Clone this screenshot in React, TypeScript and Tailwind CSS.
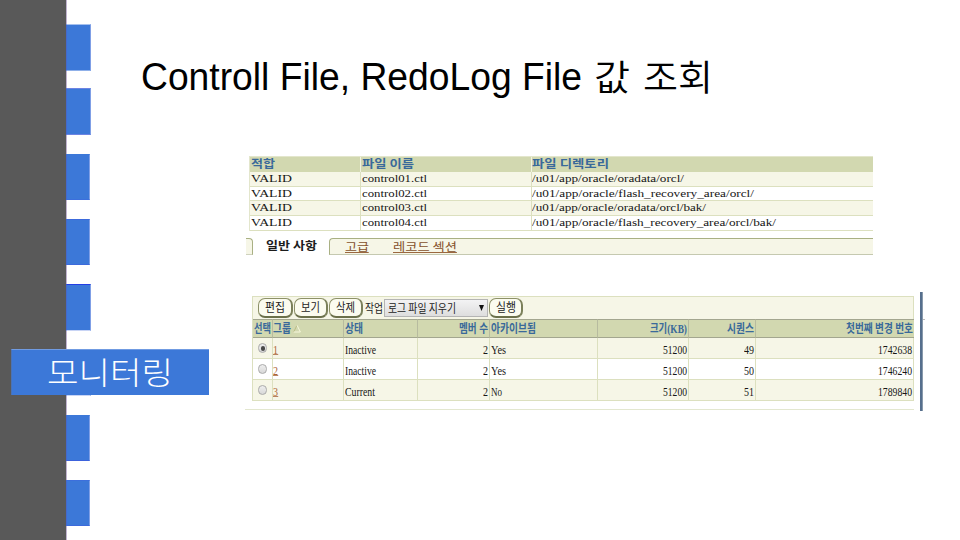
import { useLayoutEffect, useRef, type ReactNode } from 'react';

type FitProps = { w: number; className?: string; children: ReactNode };

/* Single line of text condensed or expanded to a fixed width. */
function Fit({ w, className = '', children }: FitProps) {
  const ref = useRef<HTMLSpanElement>(null);
  useLayoutEffect(() => {
    const el = ref.current;
    if (el && el.offsetWidth) {
      el.style.transform = 'scaleX(' + w / el.getBoundingClientRect().width + ')';
    }
    return () => {
      if (el) el.style.transform = '';
    };
  }, [w]);
  return (
    <span className="block shrink-0" style={{ width: w }}>
      <span ref={ref} className={'block w-max origin-left whitespace-nowrap ' + className}>
        {children}
      </span>
    </span>
  );
}

const serif = "font-['Liberation_Serif','Noto_Sans_CJK_KR',serif]";
const korean = "font-['Noto_Sans_CJK_KR',sans-serif]";

const markers = [
  'mt-[24px] h-[47px] w-[25px] border-t-[#a5c0ee] border-b-[#8fb0e9]',
  'mt-[17px] h-[47px] w-[25px] border-t-[#6c84e3] border-b-[#6c84e3]',
  'mt-[19px] h-[46px] w-[24px] border-t-[#3c78d8] border-b-[#3c6fdc]',
  'mt-[19px] h-[46px] w-[24px] border-t-[#3c6adc] border-b-[#3c6adc]',
  'mt-[19px] h-[47px] w-[25px] border-t-[#243fe4] border-b-[#c8d4f5]',
  'mt-[18px] h-[47px] w-[25px] border-t-[#3c5fdc] border-b-[#c8d4f5]',
  'mt-[19px] h-[46px] w-[24px] border-t-[#3c78d8] border-b-[#3c62dc]',
  'mt-[19px] h-[46px] w-[24px] border-t-[#3c6fdc] border-b-[#3c6adc]',
];

const files = [
  { name: 'control01.ctl', dir: '/u01/app/oracle/oradata/orcl/', w: 152, row: 'h-[15px] bg-[#f6f6e7]' },
  { name: 'control02.ctl', dir: '/u01/app/oracle/flash_recovery_area/orcl/', w: 222, row: 'h-[14px] bg-white' },
  { name: 'control03.ctl', dir: '/u01/app/oracle/oradata/orcl/bak/', w: 174, row: 'h-[15px] bg-[#f6f6e7]' },
  { name: 'control04.ctl', dir: '/u01/app/oracle/flash_recovery_area/orcl/bak/', w: 244, row: 'h-[15px] bg-white' },
];

const groups = [
  { id: '1', state: 'Inactive', sw: 31, arch: 'Yes', aw: 15, seq: '49', scn: '1742638', row: 'h-[21px] bg-[#f6f6e7]' },
  { id: '2', state: 'Inactive', sw: 31, arch: 'Yes', aw: 15, seq: '50', scn: '1746240', row: 'h-[21px] bg-white' },
  { id: '3', state: 'Current', sw: 30, arch: 'No', aw: 11, seq: '51', scn: '1789840', row: 'h-[21px] bg-[#f6f6e7]' },
];

const cols = 'grid grid-cols-[20px_71px_74px_72px_108px_91px_67px_158px]';

function Pill({ w, children }: { w: string; children: ReactNode }) {
  return (
    <span className={'flex h-[20px] justify-center rounded-[7px] border border-r-2 border-b-2 border-[#8c9068] border-r-[#7b805a] border-b-[#6b704b] bg-[#fbfbef] ' + w}>
      {children}
    </span>
  );
}

function HeadCell({ w, end, last, children }: { w: number; end?: boolean; last?: boolean; children: ReactNode }) {
  return (
    <div className={'flex min-w-0 items-center border-y border-y-[#a3a68f] bg-[#d2d8b0] ' + (end ? 'justify-end pr-[1px] ' : 'pl-[1px] ') + (last ? '' : 'border-r border-r-[#b7bb9f]')}>
      <Fit w={w} className={'text-[12px] leading-[16px] font-bold text-[#39699a] ' + serif}>{children}</Fit>
    </div>
  );
}

function Cell({ w, end, children }: { w: number; end?: boolean; children: ReactNode }) {
  return (
    <div className={'flex min-w-0 border-r border-b border-[#dce0bf] pt-[5px] ' + (end ? 'justify-end pr-[1px]' : 'pl-[1px]')}>
      <Fit w={w} className={'text-[11.5px] leading-[14px] text-[#161616] ' + serif}>{children}</Fit>
    </div>
  );
}

export default function App() {
  return (
    <div className="relative flex h-[540px] w-[960px] overflow-hidden bg-white">
      <aside className="h-full w-[66px] shrink-0 bg-[#595959]" />
      <div className="flex h-full w-[25px] shrink-0 flex-col shadow-[inset_1px_0_0_#c0b3cf]">
        {markers.map((m, i) => (
          <div key={i} className={'shrink-0 border-y border-r border-r-[#7f9fe6] border-l border-l-[#4669cb] bg-[#3c78d8] ' + m} />
        ))}
      </div>

      <main className="flex flex-1 flex-col">
        <h1 className="mt-[54px] ml-[50px] flex h-[46px] items-start text-black">
          <Fit w={441} className="font-['Liberation_Sans',sans-serif] text-[38px] leading-[47px]">Controll File, RedoLog File</Fit>
          <span className="ml-[12px] flex gap-[13px]">
            <Fit w={36} className={'text-[36px] leading-[42px] font-[350] ' + korean}>값</Fit>
            <Fit w={70} className={'text-[36px] leading-[42px] font-[350] ' + korean}>조회</Fit>
          </span>
        </h1>

        <section className="mt-[56px] ml-[158px] w-[624px] border-l border-[#e3e6cc]">
          <div className="grid h-[16px] grid-cols-[111px_171px_1fr] border-t border-[#e3e6cc] bg-[#d2d8b0]">
            <div className="flex border-r border-[#f0f2e0] pl-[1px]">
              <Fit w={24} className={'text-[11px] leading-[12px] font-bold text-[#39699a] ' + korean}>적합</Fit>
            </div>
            <div className="flex border-r border-[#f0f2e0] pl-[1px]">
              <Fit w={52} className={'text-[11px] leading-[12px] font-bold text-[#39699a] ' + korean}>파일 이름</Fit>
            </div>
            <div className="flex">
              <Fit w={77} className={'text-[11px] leading-[12px] font-bold text-[#39699a] ' + korean}>파일 디렉토리</Fit>
            </div>
          </div>
          {files.map((f) => (
            <div key={f.name} className={'grid grid-cols-[111px_171px_1fr] border-b border-[#dce0bf] ' + f.row}>
              <div className="flex items-center border-r border-[#dce0bf] pl-[1px]">
                <Fit w={41} className={'text-[10px] leading-[12px] text-[#161616] ' + serif}>VALID</Fit>
              </div>
              <div className="flex items-center border-r border-[#dce0bf] pl-[1px]">
                <Fit w={65} className={'text-[10px] leading-[12px] text-[#161616] ' + serif}>{f.name}</Fit>
              </div>
              <div className="flex items-center">
                <Fit w={f.w} className={'text-[10px] leading-[12px] text-[#161616] ' + serif}>{f.dir}</Fit>
              </div>
            </div>
          ))}
        </section>

        <nav className="mt-[7px] ml-[155px] flex h-[17px] w-[627px]">
          <div className="w-[7px] rounded-tr-[4px] border-t border-r border-b border-[#a9b083] border-b-[#cfd2bd] bg-[#f6f6e7]" />
          <div className="flex w-[76px] pl-[13px]">
            <Fit w={51} className={'text-[11px] leading-[15px] font-bold text-[#1c1c1c] ' + korean}>일반 사항</Fit>
          </div>
          <div className="flex flex-1 items-center gap-[24px] rounded-tl-[4px] border-t border-b border-l border-[#a9b083] border-b-[#c5c9b0] bg-[#f6f6e7] pl-[15px]">
            <Fit w={24} className={'border-b border-[#9b6840] text-[11px] leading-[11px] text-[#85512b] ' + korean}>고급</Fit>
            <Fit w={64} className={'border-b border-[#9b6840] text-[11px] leading-[11px] text-[#85512b] ' + korean}>레코드 섹션</Fit>
          </div>
        </nav>

        <div className="mt-[37px] ml-[154px] flex">
          <section className="mt-[4px] h-[114px] w-[669px] border-b border-[#e3e7cf] pl-[7px]">
            <div className="w-[662px] border-l border-[#dce0bf]">
              <div className="flex h-[23px] border-t border-r border-[#dce0bf] bg-[#f6f6e7] pt-[1px] pl-[5px]">
                <Pill w="w-[35px]"><Fit w={20} className={'text-[12px] leading-[15px] text-[#222] ' + korean}>편집</Fit></Pill>
                <Pill w="ml-[1px] w-[34px]"><Fit w={19} className={'text-[12px] leading-[15px] text-[#222] ' + korean}>보기</Fit></Pill>
                <Pill w="ml-[1px] w-[34px]"><Fit w={19} className={'text-[12px] leading-[15px] text-[#222] ' + korean}>삭제</Fit></Pill>
                <span className="mt-[2px] ml-[2px]"><Fit w={18} className={'text-[12px] leading-[16px] text-[#222] ' + korean}>작업</Fit></span>
                <span className="mt-px ml-[1px] flex h-[18px] w-[104px] items-center justify-between border border-[#b4b4b4] bg-linear-to-b from-[#f3f3f4] to-[#dedede] pr-[3px] pl-[3px]">
                  <Fit w={68} className={'text-[12px] leading-[16px] text-[#222] ' + korean}>로그 파일 지우기</Fit>
                  <svg width="5" height="6" viewBox="0 0 5 6"><path d="M0 0H5L2.5 6Z" fill="#111" /></svg>
                </span>
                <Pill w="ml-[1px] w-[34px]"><Fit w={20} className={'text-[12px] leading-[15px] text-[#222] ' + korean}>실행</Fit></Pill>
              </div>
              <div className={'h-[19px] ' + cols}>
                <HeadCell w={17}>선택</HeadCell>
                <div className="flex items-center border-y border-r border-y-[#a3a68f] border-r-[#b7bb9f] bg-[#d2d8b0]">
                  <Fit w={18} className={'text-[12px] leading-[16px] font-bold text-[#39699a] ' + serif}>그룹</Fit>
                  <svg className="ml-[2px]" width="8" height="9" viewBox="0 0 8 9"><path d="M.7 8L4 1.2" stroke="#b9bc86" fill="none" /><path d="M4 1.2L7.4 8H.7" stroke="#f6f7dc" fill="none" /></svg>
                </div>
                <HeadCell w={18}>상태</HeadCell>
                <HeadCell w={29} end>멤버 수</HeadCell>
                <HeadCell w={45}>아카이브됨</HeadCell>
                <HeadCell w={37} end>크기(KB)</HeadCell>
                <HeadCell w={27} end>시퀀스</HeadCell>
                <HeadCell w={67} end last>첫번째 변경 번호</HeadCell>
              </div>
              {groups.map((g) => (
                <div key={g.id} className={cols + ' ' + g.row}>
                  <div className="flex justify-center border-r border-b border-[#dce0bf] pt-[5px]">
                    <span className="flex h-[10px] w-[9px] items-center justify-center rounded-full border border-[#aaaaaa] bg-linear-to-b from-[#eeeeee] to-[#d8d8d8]">
                      {g.id === '1' && <span className="h-[5px] w-[4px] rounded-full bg-[#484848]" />}
                    </span>
                  </div>
                  <div className="flex border-r border-b border-[#dce0bf] pt-[6px]">
                    <Fit w={5} className={'h-[11px] border-b border-[#b98460] text-[11.5px] leading-[12px] text-[#ad6535] ' + serif}>{g.id}</Fit>
                  </div>
                  <Cell w={g.sw}>{g.state}</Cell>
                  <Cell w={5} end>2</Cell>
                  <Cell w={g.aw}>{g.arch}</Cell>
                  <Cell w={24} end>51200</Cell>
                  <Cell w={10} end>{g.seq}</Cell>
                  <Cell w={34} end>{g.scn}</Cell>
                </div>
              ))}
            </div>
          </section>
          <div className="ml-[6px] h-[119px] w-[3px] border-r border-[#8799ab] bg-[#566f8d]" />
          <div className="mt-[27px] h-px w-[2px] bg-[#bbbbbb]" />
        </div>
      </main>

      <div className="absolute top-[349px] left-[11px] flex h-[46px] w-[198px] justify-center border-t border-l border-t-[#709be2] border-l-[#4b72b4] bg-[#3c78d8] pr-[1px] text-white">
        <Fit w={126} className={'text-[31px] leading-[41px] font-light ' + korean}>모니터링</Fit>
      </div>
    </div>
  );
}
